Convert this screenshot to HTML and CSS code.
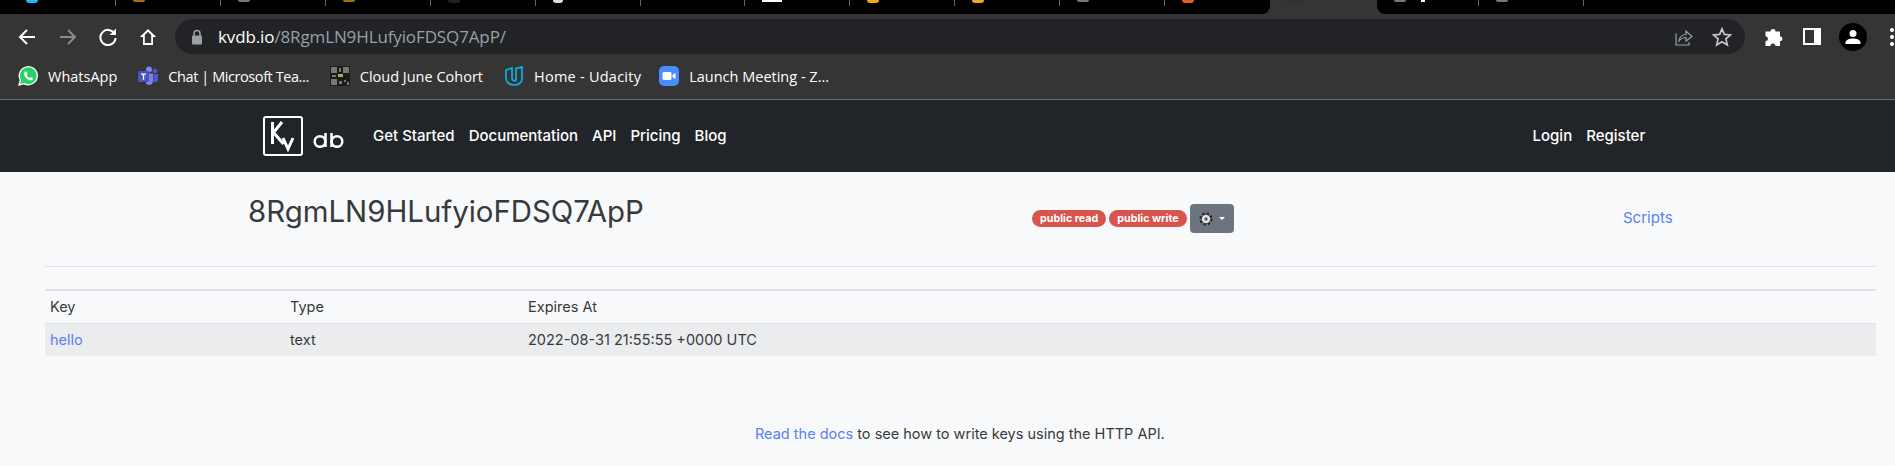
FILE: index.html
```html
<!DOCTYPE html>
<html lang="en">
<head>
  <meta charset="UTF-8"/>
  <meta name="viewport" content="width=device-width, initial-scale=1.0"/>
  <title>kvdb.io - 8RgmLN9HLufyioFDSQ7ApP</title>
  <link rel="stylesheet" href="styles.css">
</head>
<body>

  <!-- Browser chrome -->
  <div class="tab-strip">
    <div class="tab-group group-left">
      <div class="tab first"><i class="fav fav-cyan"></i></div>
      <div class="tab"><i class="fav fav-orange"></i></div>
      <div class="tab"><i class="fav fav-gray"></i></div>
      <div class="tab"><i class="fav fav-orange"></i></div>
      <div class="tab"><i class="fav fav-dark"></i></div>
      <div class="tab"><i class="fav fav-white"></i></div>
      <div class="tab"></div>
      <div class="tab"><i class="fav fav-page"></i></div>
      <div class="tab"><i class="fav fav-yellow"></i></div>
      <div class="tab"><i class="fav fav-yellow"></i></div>
      <div class="tab"><i class="fav fav-gray"></i></div>
      <div class="tab last"><i class="fav fav-red"></i></div>
    </div>
    <div class="tab-active"><i class="fav fav-slate"></i></div>
    <div class="tab-group group-right">
      <div class="tab after"><i class="fav fav-gray"></i><i class="fav fav-flag"></i></div>
      <div class="tab"><i class="fav fav-gray"></i></div>
    </div>
  </div>

  <div class="toolbar">
    <div class="nav-buttons">
      <svg viewBox="0 0 20 20" class="tool-icon"><path d="M18 10H3M10 3l-7 7 7 7" fill="none" stroke="#fff" stroke-width="2"/></svg>
      <svg viewBox="0 0 20 20" class="tool-icon"><path d="M2 10h15M10 3l7 7-7 7" fill="none" stroke="#8a8a8a" stroke-width="2"/></svg>
      <svg viewBox="0 0 20 20" class="tool-icon"><path d="M16.5 6.5A7.6 7.6 0 1 0 17.6 11" fill="none" stroke="#fff" stroke-width="2"/><path d="M18 1.5V8h-6.500z" fill="#fff"/></svg>
      <svg viewBox="0 0 20 20" class="tool-icon"><path d="M10 2 1.800 10H5v8h10v-8h3.200zM10 4.800l3.200 3.200v8H6.800V8z" fill="#fff"/></svg>
    </div>
    <div class="omnibox">
      <svg viewBox="0 0 12 16" class="lock"><path d="M3 7V4.500a3 3 0 0 1 6 0V7" fill="none" stroke="#9aa0a6" stroke-width="1.500"/><rect x="1" y="6.500" width="10" height="9" rx="1" fill="#9aa0a6"/></svg>
      <div class="url"><span class="url-host">kvdb.io</span>/8RgmLN9HLufyioFDSQ7ApP/</div>
      <svg viewBox="0 0 20 20" class="omni-icon share"><path d="M3 6.500V18h13v-3" fill="none" stroke="#9aa0a6" stroke-width="1.200"/><path d="M6 14c.5-4 3.500-6.500 7-6.500V4l6 5.500-6 4.500v-3.500c-3 0-5 1-7 3.500z" fill="none" stroke="#9aa0a6" stroke-width="1.200"/></svg>
      <svg viewBox="0 0 20 20" class="omni-icon star"><path d="M10 1.800l2.400 5.600 6.100.5-4.600 4 1.400 6-5.300-3.200-5.300 3.200 1.400-6-4.600-4 6.100-.5z" fill="none" stroke="#c4c7c5" stroke-width="1.700"/></svg>
    </div>
    <div class="tool-right">
      <svg viewBox="0 0 20 20" class="ext-icon"><path d="M7.500 4.500a2.500 2.500 0 0 1 5 0H17v4.700a2.500 2.500 0 0 1 0 5V19h-4.600a2.500 2.500 0 0 0-5 0H2.500v-4.800a2.500 2.500 0 0 0 0-5V4.500z" fill="#fff"/></svg>
      <div class="side-panel"></div>
      <div class="avatar">
        <svg viewBox="0 0 20 20"><circle cx="10" cy="6.500" r="3.500" fill="#fff"/><path d="M2.500 17v-1.500c0-2.500 4-4 7.500-4s7.500 1.500 7.500 4V17z" fill="#fff"/></svg>
      </div>
      <div class="kebab"><i></i><i></i><i></i></div>
    </div>
  </div>

  <div class="bookmarks">
    <a class="bookmark">
      <svg viewBox="0 0 20 20"><path d="M1 19l1.400-5A9 9 0 1 1 6 17.600z" fill="#25d366" stroke="#fff" stroke-width="1.300"/><path d="M7 5.500c-1.500 1-1.500 3 0 5s3.500 3.800 5.500 4c1.500 0 2.500-1 2.500-2.200L13 11l-1.300 1c-1.200-.5-2.300-1.600-3-3L9.500 8 8.400 5.500z" fill="#fff"/></svg>
      <span>WhatsApp</span>
    </a>
    <a class="bookmark bookmark-tight">
      <svg viewBox="0 0 20 20"><circle cx="11" cy="3.500" r="3" fill="#7b83eb"/><circle cx="17" cy="5" r="2.300" fill="#5059c9"/><path d="M8 7.500h7v8a4 4 0 0 1-7 2z" fill="#7b83eb"/><path d="M15.500 8H20v5.500a3 3 0 0 1-4.500 2.500z" fill="#5059c9"/><rect x="0" y="5" width="11" height="11" rx="1" fill="#4b53bc"/><path d="M3 7.500h5v1.300H6.200v5H4.800v-5H3z" fill="#fff"/></svg>
      <span>Chat | Microsoft Tea...</span>
    </a>
    <a class="bookmark">
      <svg viewBox="0 0 20 20"><rect width="20" height="20" fill="#1b1b1b"/><path d="M1 1h6v6H1zM13 1h6v6h-6zM1 13h6v6H1zM9 2h2v4H9zM2 9h4v2H2zM14 14h2v2h-2zM17 16h2v3h-2zM9 15h3v3H9z" fill="#77776f"/><rect x="8" y="8" width="5" height="3" fill="#9fb24c"/></svg>
      <span>Cloud June Cohort</span>
    </a>
    <a class="bookmark bookmark-wide">
      <svg viewBox="0 0 20 20"><path d="M2 4 8 2v10c0 2 1.500 3 4 2.500V2.500L18 1v12c0 4-4 6-8 6-5 0-8-3-8-7z" fill="none" stroke="#02b3e4" stroke-width="1.700"/></svg>
      <span>Home - Udacity</span>
    </a>
    <a class="bookmark">
      <svg viewBox="0 0 20 20"><rect width="20" height="20" rx="5" fill="#4a8cff"/><rect x="3.500" y="6" width="9" height="8" rx="1.500" fill="#fff"/><path d="M13.500 9l3-2.200v6.400l-3-2.200z" fill="#fff"/></svg>
      <span>Launch Meeting - Z...</span>
    </a>
  </div>

  <!-- Site navbar -->
  <header class="navbar">
    <a class="logo">
      <span class="logo-box">
        <svg viewBox="0 0 36 36"><path d="M7.500 4v22M17 4 8.500 14.500 18.500 26M18 20l5 11 5-11" fill="none" stroke="#fff" stroke-width="3"/></svg>
      </span>
      <svg viewBox="0 0 32 16" class="logo-db"><circle cx="7" cy="9.500" r="5.300" fill="none" stroke="#fff" stroke-width="2.500"/><path d="M12.500 1v14M18.500 1v14" stroke="#fff" stroke-width="2.500"/><circle cx="24" cy="9.500" r="5.300" fill="none" stroke="#fff" stroke-width="2.500"/></svg>
    </a>
    <nav class="nav-left">
      <a>Get Started</a>
      <a>Documentation</a>
      <a>API</a>
      <a>Pricing</a>
      <a>Blog</a>
    </nav>
    <nav class="nav-right">
      <a>Login</a>
      <a>Register</a>
    </nav>
  </header>

  <!-- Bucket page -->
  <div class="bucket-head">
    <h1>8RgmLN9HLufyioFDSQ7ApP</h1>
    <div class="bucket-flags">
      <span class="badge">public read</span>
      <span class="badge">public write</span>
      <button class="gear-btn">
        <svg viewBox="0 0 16 16"><circle cx="8" cy="8" r="6.300" fill="none" stroke="#222" stroke-width="2.600" stroke-dasharray="2.500 2.450"/><circle cx="8" cy="8" r="5.200" fill="#e8e8e8" stroke="#222" stroke-width=".8"/><circle cx="8" cy="8" r="1.900" fill="#555"/></svg>
        <i class="caret"></i>
      </button>
    </div>
    <a class="scripts-link">Scripts</a>
  </div>

  <hr class="divider">

  <table class="keys">
    <thead>
      <tr><th class="col-key">Key</th><th class="col-type">Type</th><th>Expires At</th></tr>
    </thead>
    <tbody>
      <tr><td><a>hello</a></td><td>text</td><td>2022-08-31 21:55:55 +0000 UTC</td></tr>
    </tbody>
  </table>

  <p class="hint"><a>Read the docs</a> to see how to write keys using the HTTP API.</p>

</body>
</html>
```

FILE: styles.css
```css
body {
  margin: 0;
  height: 466px;
  overflow: hidden;
  font-family: Inter, "Noto Sans", sans-serif;
  font-size: 14.5px;
  color: #373a3c;
  background: #f8f9fb;
}

a {
  color: #5b80f0;
  text-decoration: none;
}

/* browser chrome */
.tab-strip {
  display: flex;
  height: 14px;
  background: #353535;
}

.tab-group {
  display: flex;
  background: #000;
}

.group-left {
  width: 1270px;
  border-bottom-right-radius: 8px;
}

.group-right {
  flex: 1;
  border-bottom-left-radius: 8px;
}

.tab {
  box-sizing: border-box;
  width: 105px;
  height: 6px;
  border-right: 1px solid #666;
  display: flex;
  padding-left: 17px;
  gap: 15px;
}

.tab.first {
  width: 116px;
  padding-left: 26px;
}

.tab.last {
  border-right: none;
}

.tab.after {
  width: 102px;
}

.tab-active {
  width: 107px;
  padding-left: 14px;
  box-sizing: border-box;
}

.fav {
  display: block;
  width: 12px;
  height: 2px;
  border-radius: 0 0 6px 6px;
}

.fav-cyan { background: #29b6f6; height: 3px; }
.fav-orange { background: #a86c14; }
.fav-gray { background: #777; }
.fav-dark { background: #222; height: 3px; }
.fav-white { background: #ddd; height: 3px; width: 10px; }
.fav-page { background: #fff; width: 20px; border-radius: 0; }
.fav-yellow { background: #f0a81e; height: 3px; }
.fav-red { background: #e2601a; height: 3px; }
.fav-slate { background: #2b3238; width: 21px; border-radius: 0; }
.fav-flag { background: #fff; width: 4px; border-radius: 0; }

.toolbar {
  display: flex;
  align-items: center;
  height: 40px;
  background: #353535;
}

.nav-buttons {
  display: flex;
  align-items: center;
  gap: 20px;
  padding: 5px 0 0 17px;
  box-sizing: border-box;
  width: 175px;
}

.tool-icon {
  width: 20px;
  height: 20px;
}

.tool-icon + .tool-icon {
  position: relative;
  left: 1px;
}

.omnibox {
  display: flex;
  align-items: center;
  box-sizing: border-box;
  width: 1570px;
  height: 35px;
  margin-top: 5px;
  padding: 0 13px 0 16px;
  background: #212326;
  border-radius: 18px;
  color: #9aa0a6;
}

.lock {
  width: 12px;
  height: 16px;
  margin-right: 15px;
}

.url {
  flex: 1;
  font-family: "Open Sans", sans-serif;
  font-size: 17px;
  letter-spacing: -0.12px;
}

.url-host {
  color: #fff;
}

.omni-icon {
  width: 20px;
  height: 20px;
}

.share {
  margin-right: 19px;
}

.tool-right {
  display: flex;
  align-items: center;
  padding: 5px 0 0 18px;
  gap: 19px;
}

.ext-icon {
  width: 20px;
  height: 20px;
}

.side-panel {
  box-sizing: border-box;
  width: 18px;
  height: 17px;
  margin-left: 1px;
  border: 2px solid #fff;
  border-right-width: 7px;
}

.avatar {
  width: 28px;
  height: 28px;
  margin: 0 -2px 0 -1px;
  border-radius: 50%;
  background: #000;
  display: flex;
  align-items: center;
  justify-content: center;
}

.avatar svg {
  width: 20px;
  height: 20px;
}

.kebab {
  display: flex;
  flex-direction: column;
  gap: 3px;
  margin-left: 6px;
}

.kebab i {
  display: block;
  width: 4px;
  height: 4px;
  background: #fff;
  border-radius: 50%;
}

.bookmarks {
  display: flex;
  align-items: center;
  gap: 21px;
  box-sizing: border-box;
  height: 46px;
  padding: 0 0 1px 18px;
  background: #353535;
  border-bottom: 1px solid #6b6b6b;
}

.bookmark {
  display: flex;
  align-items: center;
  gap: 10px;
  color: #fff;
  font-family: "Open Sans", sans-serif;
  font-size: 14.5px;
}

.bookmark-tight {
  letter-spacing: -0.42px;
}

.bookmark-wide {
  letter-spacing: 0.25px;
  margin-right: -3px;
}

.bookmark svg {
  width: 20px;
  height: 20px;
}

/* site navbar */
.navbar {
  display: flex;
  align-items: center;
  height: 72px;
  padding-left: 263px;
  background: #212529;
}

.logo {
  display: flex;
  align-items: center;
  margin-right: 28px;
}

.logo-box {
  display: block;
  box-sizing: border-box;
  width: 40px;
  height: 40px;
  border: 2px solid #fff;
  border-radius: 3px;
}

.logo-box svg {
  display: block;
  width: 36px;
  height: 36px;
}

.logo-db {
  width: 32px;
  height: 16px;
  margin: 8px 0 0 10px;
}

.nav-left {
  display: flex;
  gap: 14px;
  margin-bottom: 2px;
}

.nav-left a,
.nav-right a {
  color: #fff;
  font-size: 15px;
  font-weight: 500;
}

.nav-right {
  display: flex;
  gap: 14px;
  margin: 0 0 2px 806px;
}

/* bucket page */
.bucket-head {
  display: flex;
  align-items: flex-start;
  height: 94px;
  padding-left: 248px;
  box-sizing: border-box;
}

.bucket-head h1 {
  margin: 20px 0 0;
  width: 784px;
  font-size: 29.4px;
  font-weight: 400;
  line-height: 40px;
}

.bucket-flags {
  display: flex;
  align-items: center;
  gap: 3px;
  margin-top: 32px;
  width: 591px;
}

.badge {
  display: block;
  padding: 0 8px;
  height: 17px;
  line-height: 17px;
  border-radius: 9px;
  background: #d9534f;
  color: #fff;
  font-size: 10.7px;
  font-weight: 700;
}

.gear-btn {
  display: flex;
  align-items: center;
  justify-content: center;
  gap: 6px;
  width: 44px;
  height: 29px;
  padding: 0;
  border: none;
  border-radius: 4px;
  background: #6c757d;
}

.gear-btn svg {
  width: 14px;
  height: 14px;
}

.caret {
  display: block;
  border-top: 3px solid #fff;
  border-left: 3px solid transparent;
  border-right: 3px solid transparent;
}

.scripts-link {
  margin-top: 37px;
  font-size: 15px;
  line-height: 18px;
}

.divider {
  margin: 0 19px 0 45px;
  border: none;
  border-top: 1px solid #dfe1e6;
}

.keys {
  box-sizing: border-box;
  width: 1831px;
  margin: 22px 19px 0 45px;
  border-collapse: collapse;
  border-top: 2px solid #dfe1e6;
}

.keys th,
.keys td {
  padding: 0 5px 2px;
  height: 30px;
  text-align: left;
  font-weight: 400;
}

.keys th {
  border-bottom: 1px solid #dfe1e6;
}

.col-key {
  width: 230px;
}

.col-type {
  width: 228px;
}

.keys tbody tr {
  background: #ebecee;
}

.hint {
  margin: 68px 0 0;
  padding-left: 755px;
  line-height: 20px;
}
```
